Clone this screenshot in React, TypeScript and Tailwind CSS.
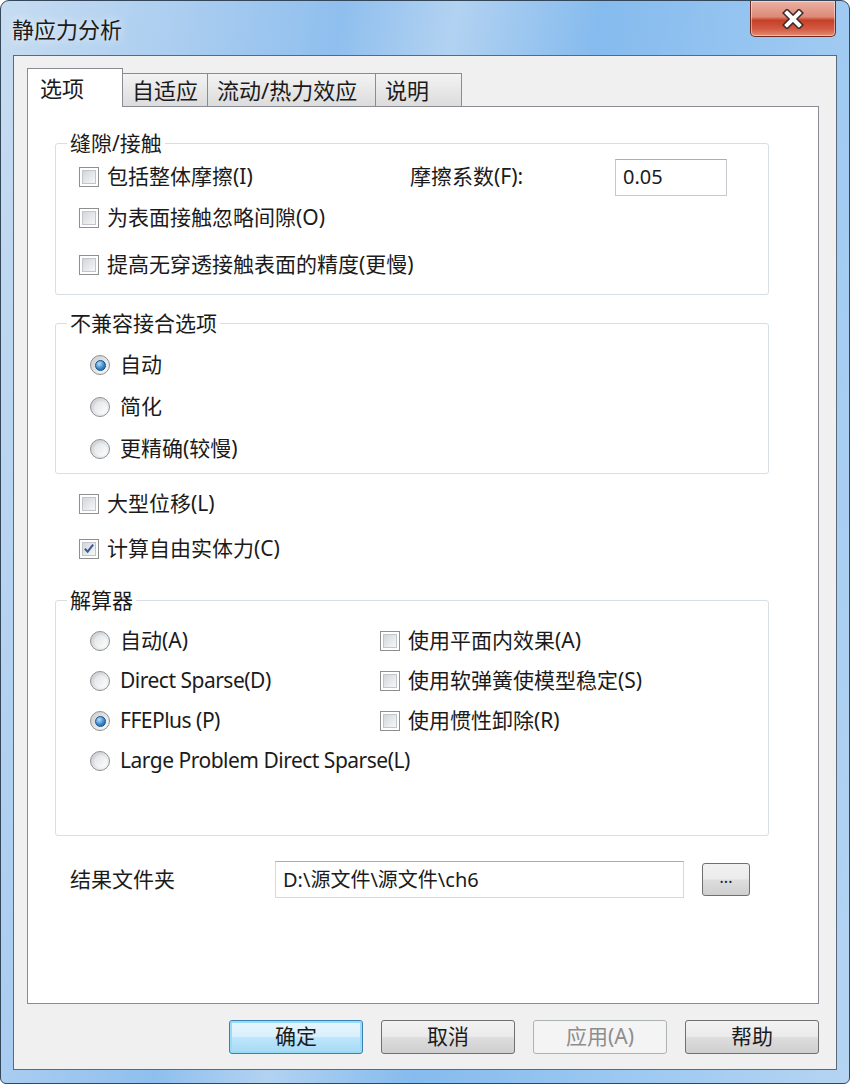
import type { ReactNode } from "react";

function CheckBox({ checked = false }: { checked?: boolean }) {
  return (
    <span className="flex h-[20px] w-[20px] shrink-0 items-center justify-center border border-[#8e8f8f] bg-white p-[2px]">
      <span className="flex h-full w-full items-center justify-center border border-[#c2c6cc] bg-gradient-to-br from-[#d2d6dc] to-[#f7f7f7]">
        {checked && (
          <svg width="13" height="13" viewBox="0 0 13 13" aria-hidden="true">
            <path d="M2 6.8 L5 10 L11 2.2" fill="none" stroke="#3f5a9a" strokeWidth="2.2" />
          </svg>
        )}
      </span>
    </span>
  );
}

function Radio({ checked = false }: { checked?: boolean }) {
  return (
    <span className="flex h-[20px] w-[20px] shrink-0 items-center justify-center rounded-full border border-[#8e8f8f] bg-gradient-to-br from-[#c9ccd1] to-[#fbfbfb]">
      {checked ? (
        <span className="h-[11px] w-[11px] rounded-full border border-[#1c4f80] bg-[radial-gradient(circle_at_35%_30%,#b5e0fb,#3a8bd0_55%,#17507f)]" />
      ) : (
        <span className="h-[13px] w-[13px] rounded-full bg-gradient-to-br from-[#dfe1e4] to-white" />
      )}
    </span>
  );
}

function CheckRow({ label, checked }: { label: ReactNode; checked?: boolean }) {
  return (
    <div className="flex items-center gap-[8px] whitespace-nowrap">
      <CheckBox checked={checked} />
      <span>{label}</span>
    </div>
  );
}

function RadioRow({ label, checked, latin }: { label: ReactNode; checked?: boolean; latin?: boolean }) {
  return (
    <div className="flex items-center gap-[10px] whitespace-nowrap">
      <Radio checked={checked} />
      <span className={latin ? "tracking-[-0.5px]" : ""}>{label}</span>
    </div>
  );
}

function Group({ title, children, className }: { title: string; children: ReactNode; className?: string }) {
  return (
    <fieldset className={`rounded-[3px] border border-[#d5dfe5] ${className ?? ""}`}>
      <legend className="ml-[11px] px-[3px] leading-[24px]">{title}</legend>
      {children}
    </fieldset>
  );
}

function DialogButton({ children, variant = "normal" }: { children: ReactNode; variant?: "normal" | "default" | "disabled" }) {
  const styles = {
    normal:
      "border-[#707070] bg-[linear-gradient(to_bottom,#f2f2f2_0%,#ebebeb_48%,#dddddd_52%,#cfcfcf_100%)] text-[#1b1b1b]",
    default:
      "border-[#3c7fb1] bg-[linear-gradient(to_bottom,#e8f5fd_0%,#d9f0fc_48%,#bee6fd_52%,#a7d9f5_100%)] text-[#1b1b1b] shadow-[inset_0_0_0_2px_#98dcf5]",
    disabled: "border-[#adb2b5] bg-[#f4f4f4] text-[#8d8d8d]",
  }[variant];
  return (
    <button
      type="button"
      className={`flex h-[34px] w-[134px] items-center justify-center rounded-[3px] border text-[21px] ${styles}`}
    >
      {children}
    </button>
  );
}

export default function App() {
  return (
    <div className="h-[1084px] w-[850px] bg-white font-['Noto_Sans','Noto_Sans_CJK_SC',sans-serif] text-[21px] text-[#1b1b1b]">
      <div className="flex h-full flex-col rounded-t-[9px] rounded-b-[6px] border border-[#34465a] bg-[linear-gradient(100deg,#c7dcf1_0%,#aacdf0_18%,#8fbfee_33%,#b2d2f1_44%,#85bbee_58%,#9cc8f1_78%,#b5d4f2_100%)]">
        {/* title bar */}
        <div className="flex h-[54px] items-start">
          <div className="pl-[11px] pt-[13px] text-[22px] leading-[30px] [text-shadow:0_0_10px_rgba(255,255,255,0.95)]">
            静应力分析
          </div>
          <div className="ml-auto mr-[13px] flex h-[36px] w-[86px] items-center justify-center rounded-b-[5px] border border-t-0 border-[#6d2a21] bg-[linear-gradient(to_bottom,#eab1a3_0%,#dd8a78_45%,#c63f27_55%,#d35a42_80%,#e48c72_100%)] shadow-[inset_0_0_0_1px_rgba(255,255,255,0.45)]">
            <svg width="24" height="20" viewBox="0 0 24 20" aria-hidden="true">
              <path d="M6 4 L18 16 M18 4 L6 16" stroke="#3b2a28" strokeWidth="7" strokeLinecap="square" />
              <path d="M6 4 L18 16 M18 4 L6 16" stroke="#ffffff" strokeWidth="4" strokeLinecap="square" />
            </svg>
          </div>
        </div>

        {/* client area */}
        <div className="mx-[12px] mb-[13px] flex flex-1 flex-col border border-[#5b6a7a] bg-[#f0f0f0] pl-[13px] pr-[17px] pt-[12px]">
          {/* tabs */}
          <div className="relative z-10 flex h-[38px] items-end">
            <div className="-mb-px flex h-[39px] w-[96px] items-start border border-b-0 border-[#898c95] bg-white pl-[12px] pt-[4px] text-[22px] leading-[30px]">
              选项
            </div>
            <div className="flex h-[33px] w-[85px] items-center border-t border-r border-[#898c95] bg-gradient-to-b from-[#f3f3f3] to-[#dcdcdc] pl-[9px] text-[22px]">
              自适应
            </div>
            <div className="flex h-[33px] w-[168px] items-center border-t border-r border-[#898c95] bg-gradient-to-b from-[#f3f3f3] to-[#dcdcdc] pl-[9px] text-[22px]">
              流动/热力效应
            </div>
            <div className="flex h-[33px] w-[86px] items-center border-t border-r border-[#898c95] bg-gradient-to-b from-[#f3f3f3] to-[#dcdcdc] pl-[9px] text-[22px]">
              说明
            </div>
          </div>

          {/* tab panel */}
          <div className="flex h-[898px] flex-col border border-[#898c95] bg-white pl-[27px] pr-[49px]">
            <Group title="缝隙/接触" className="mt-[24px]">
              <div className="pb-[8px] pl-[23px] pt-[2px]">
                <div className="flex h-[40px] items-center">
                  <div className="w-[331px]">
                    <CheckRow label="包括整体摩擦(I)" />
                  </div>
                  <span className="w-[205px]">摩擦系数(F):</span>
                  <div className="flex h-[37px] w-[112px] items-center border border-[#c5c8cd] border-t-[#abadb3] bg-white px-[7px] text-[20px]">
                    0.05
                  </div>
                </div>
                <div className="flex h-[42px] items-center">
                  <CheckRow label="为表面接触忽略间隙(O)" />
                </div>
                <div className="mt-[5px] flex h-[42px] items-center">
                  <CheckRow label="提高无穿透接触表面的精度(更慢)" />
                </div>
              </div>
            </Group>

            <Group title="不兼容接合选项" className="mt-[16px]">
              <div className="pb-[3px] pl-[34px] pt-[9px]">
                <div className="flex h-[42px] items-center">
                  <RadioRow label="自动" checked />
                </div>
                <div className="flex h-[42px] items-center">
                  <RadioRow label="简化" />
                </div>
                <div className="flex h-[42px] items-center">
                  <RadioRow label="更精确(较慢)" />
                </div>
              </div>
            </Group>

            <div className="mt-[7px] pl-[24px]">
              <div className="flex h-[45px] items-center">
                <CheckRow label="大型位移(L)" />
              </div>
              <div className="flex h-[45px] items-center">
                <CheckRow label="计算自由实体力(C)" checked />
              </div>
            </div>

            <Group title="解算器" className="mt-[17px]">
              <div className="grid grid-cols-[290px_1fr] pb-[54px] pl-[34px] pt-[9px]">
                <div className="flex flex-col">
                  <div className="flex h-[40px] items-center">
                    <RadioRow label="自动(A)" />
                  </div>
                  <div className="flex h-[40px] items-center">
                    <RadioRow label="Direct Sparse(D)" latin />
                  </div>
                  <div className="flex h-[40px] items-center">
                    <RadioRow label="FFEPlus (P)" checked latin />
                  </div>
                  <div className="flex h-[40px] items-center">
                    <RadioRow label="Large Problem Direct Sparse(L)" latin />
                  </div>
                </div>
                <div className="flex flex-col">
                  <div className="flex h-[40px] items-center">
                    <CheckRow label="使用平面内效果(A)" />
                  </div>
                  <div className="flex h-[40px] items-center">
                    <CheckRow label="使用软弹簧使模型稳定(S)" />
                  </div>
                  <div className="flex h-[40px] items-center">
                    <CheckRow label="使用惯性卸除(R)" />
                  </div>
                </div>
              </div>
            </Group>

            <div className="mt-[22px] flex h-[43px] items-center pl-[15px]">
              <span className="w-[205px]">结果文件夹</span>
              <div className="flex h-[37px] w-[409px] items-center border border-[#d5d8dc] border-t-[#abadb3] bg-white px-[7px] text-[20px]">
                D:\源文件\源文件\ch6
              </div>
              <button
                type="button"
                className="ml-[18px] flex h-[33px] w-[48px] items-center justify-center rounded-[3px] border border-[#707070] bg-[linear-gradient(to_bottom,#f2f2f2_0%,#ebebeb_48%,#dddddd_52%,#cfcfcf_100%)] pb-[6px] text-[16px]"
              >
                ...
              </button>
            </div>
          </div>

          {/* dialog buttons */}
          <div className="mt-[16px] flex justify-end gap-[18px]">
            <DialogButton variant="default">确定</DialogButton>
            <DialogButton>取消</DialogButton>
            <DialogButton variant="disabled">应用(A)</DialogButton>
            <DialogButton>帮助</DialogButton>
          </div>
        </div>
      </div>
    </div>
  );
}
